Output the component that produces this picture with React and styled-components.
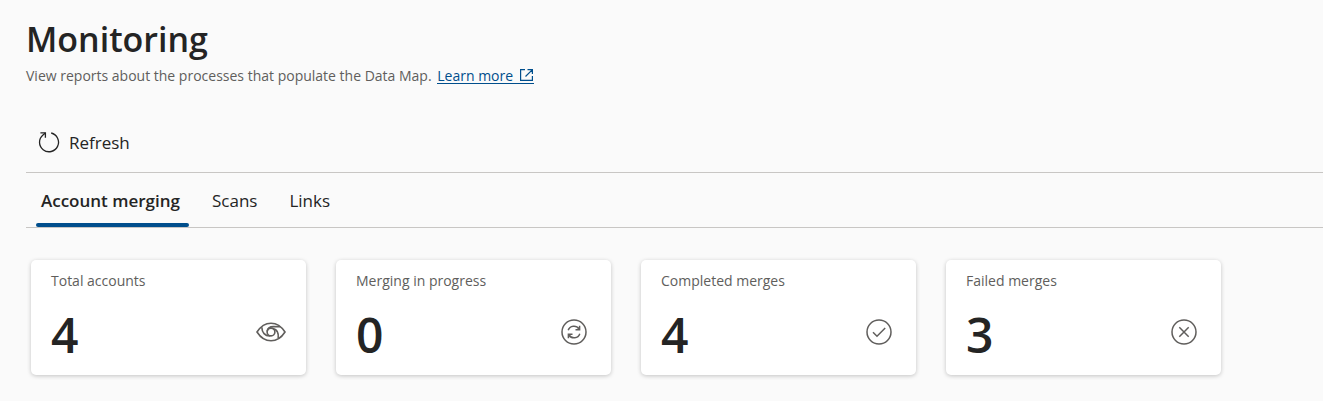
import React, { useState } from 'react'
import styled, { createGlobalStyle } from 'styled-components'

const GlobalStyle = createGlobalStyle`
    body {
        margin: 0;
        background-color: #fafafa;
        color: #242424;
        font-family: "Segoe UI", "Open Sans", "Noto Sans", sans-serif;
    }
`

const Page = styled.main`
    padding: 15px 0 24px 26px;
`

const Title = styled.h1`
    margin: 0;
    font-size: 34px;
    font-weight: 600;
    line-height: 48px;
`

const Description = styled.p`
    margin: 0;
    color: #605e5c;
    font-size: 14px;
    line-height: 26px;
`

const LearnMore = styled.a`
    display: inline-block;
    margin-left: 2px;
    border-bottom: 1px solid #004e8c;
    color: #004e8c;
    line-height: 15px;
    text-decoration: none;

    svg {
        margin-left: 6px;
        vertical-align: -1px;
    }
`

const Toolbar = styled.div`
    display: flex;
    margin-top: 23px;
    padding: 11px 12px;
    border-bottom: 1px solid #c8c6c4;
`

const ToolbarButton = styled.button`
    display: flex;
    align-items: center;
    gap: 9px;
    height: 38px;
    padding: 0;
    border: 0;
    background: none;
    color: inherit;
    font-family: inherit;
    font-size: 17px;
    cursor: pointer;
`

const TabList = styled.div`
    display: flex;
    gap: 18px;
    padding-left: 10px;
    border-bottom: 1px solid #c8c6c4;
`

const Tab = styled.button`
    display: flex;
    flex-direction: column;
    justify-content: space-between;
    height: 54px;
    padding: 0;
    border: 0;
    background: none;
    color: inherit;
    font-family: inherit;
    font-size: 17px;
    font-weight: ${props => props.$active ? 600 : 400};
    line-height: 24px;
    cursor: pointer;

    span {
        padding: 16px 9px 0 5px;
    }

    &::after {
        content: '';
        width: 100%;
        height: 4px;
        border-radius: 2px;
        background-color: ${props => props.$active ? '#004e8c' : 'transparent'};
    }
`

const Cards = styled.section`
    display: flex;
    flex-wrap: wrap;
    gap: 30px;
    padding: 32px 5px 0;
`

const Card = styled.article`
    box-sizing: border-box;
    width: 275px;
    padding: 9px 20px 12px;
    border-radius: 5px;
    background-color: #fff;
    box-shadow: 0 1px 4px rgba(0, 0, 0, 0.22);
`

const CardLabel = styled.h2`
    margin: 0;
    color: #605e5c;
    font-size: 14px;
    font-weight: 400;
    line-height: 24px;
`

const CardBody = styled.div`
    display: flex;
    align-items: center;
    justify-content: space-between;
    margin-top: 14px;
`

const CardValue = styled.strong`
    font-size: 48px;
    font-weight: 600;
    line-height: 56px;
`

const IconBox = styled.span`
    display: flex;
    width: 30px;
    margin-bottom: 6px;
    color: #605e5c;
`

const stroke = { fill: 'none', stroke: 'currentColor' }

const RefreshIcon = () => (
    <svg width="22" height="22" viewBox="0 0 22 22" strokeWidth="1.3" {...stroke} aria-hidden="true">
        <path d="M13.2 2A9.5 9.5 0 1 1 5 3.9L7.4 1.9" />
        <path d="M2.4 1.8H7.4V6.8" />
    </svg>
)

const OpenIcon = () => (
    <svg width="15" height="14" viewBox="0 0 15 14" strokeWidth="1.2" {...stroke} aria-hidden="true">
        <path d="M6 1.6H1.6V12.4H13.4V8M8.5 1.6H13.4V6M13.2 1.8L6.5 8.5" />
    </svg>
)

const EyeIcon = () => (
    <svg width="30" height="20" viewBox="0 0 30 20" strokeWidth="1.6" {...stroke} aria-hidden="true">
        <path d="M1 10C4.5 4.5 9 1.2 15 1.2S25.5 4.5 29 10C25.5 15.5 21 18.8 15 18.8S4.5 15.5 1 10Z" />
        <circle cx="15" cy="10" r="3.9" />
        <path d="M11.2 9.4C11.5 6.4 14 4.6 17.5 4.6C20 4.6 22.5 4.6 24.2 4.8" />
        <path d="M5.8 5.2C6 10.5 8.8 14.2 14.2 13.9" />
        <path d="M17 6.6C21 7.6 22.8 11.5 22.2 16.2" />
    </svg>
)

const SyncIcon = () => (
    <svg width="26" height="26" viewBox="0 0 26 26" strokeWidth="1.5" {...stroke} aria-hidden="true">
        <circle cx="13" cy="13" r="12" />
        <path d="M7.2 11.3A6 6 0 0 1 18 10M18.6 6.7V10.8H14.5" />
        <path d="M18.8 14.7A6 6 0 0 1 8 16M7.4 19.3V15.2H11.5" />
    </svg>
)

const CheckIcon = () => (
    <svg width="26" height="26" viewBox="0 0 26 26" strokeWidth="1.5" {...stroke} aria-hidden="true">
        <circle cx="13" cy="13" r="12" />
        <path d="M7 13.2L11 17.2L19.2 9" />
    </svg>
)

const FailedIcon = () => (
    <svg width="26" height="26" viewBox="0 0 26 26" strokeWidth="1.5" {...stroke} aria-hidden="true">
        <circle cx="13" cy="13" r="12" />
        <path d="M8.3 8.3L17.7 17.7M17.7 8.3L8.3 17.7" />
    </svg>
)

const tabs = ['Account merging', 'Scans', 'Links']

const stats = [
    { label: 'Total accounts', value: 4, Icon: EyeIcon },
    { label: 'Merging in progress', value: 0, Icon: SyncIcon },
    { label: 'Completed merges', value: 4, Icon: CheckIcon },
    { label: 'Failed merges', value: 3, Icon: FailedIcon },
]

export default function Monitoring() {
    const [active, setActive] = useState(tabs[0])

    return (
        <Page>
            <GlobalStyle />
            <Title>Monitoring</Title>
            <Description>
                View reports about the processes that populate the Data Map.{' '}
                <LearnMore href="#learn-more">Learn more<OpenIcon /></LearnMore>
            </Description>
            <Toolbar>
                <ToolbarButton type="button"><RefreshIcon />Refresh</ToolbarButton>
            </Toolbar>
            <TabList role="tablist">
                {tabs.map(tab => (
                    <Tab
                        key={tab}
                        type="button"
                        role="tab"
                        aria-selected={tab === active}
                        $active={tab === active}
                        onClick={() => setActive(tab)}
                    >
                        <span>{tab}</span>
                    </Tab>
                ))}
            </TabList>
            <Cards>
                {stats.map(({ label, value, Icon }) => (
                    <Card key={label}>
                        <CardLabel>{label}</CardLabel>
                        <CardBody>
                            <CardValue>{value}</CardValue>
                            <IconBox><Icon /></IconBox>
                        </CardBody>
                    </Card>
                ))}
            </Cards>
        </Page>
    )
}
